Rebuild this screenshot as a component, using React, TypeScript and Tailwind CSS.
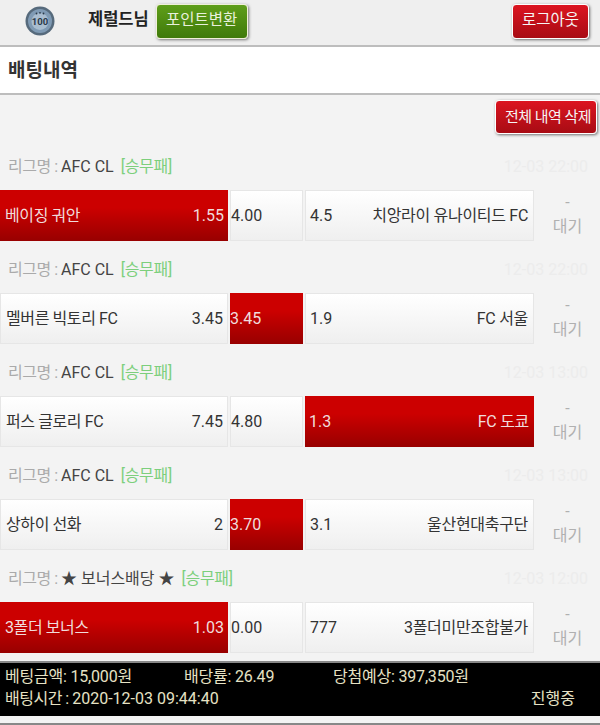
import React from 'react';

type Bet = {
  league: string;
  time: string;
  home: string;
  homeOdds: string;
  draw: string;
  awayOdds: string;
  away: string;
  pick: 'home' | 'draw' | 'away';
};

const bets: Bet[] = [
  { league: 'AFC CL', time: '12-03 22:00', home: '베이징 궈안', homeOdds: '1.55', draw: '4.00', awayOdds: '4.5', away: '치앙라이 유나이티드 FC', pick: 'home' },
  { league: 'AFC CL', time: '12-03 22:00', home: '멜버른 빅토리 FC', homeOdds: '3.45', draw: '3.45', awayOdds: '1.9', away: 'FC 서울', pick: 'draw' },
  { league: 'AFC CL', time: '12-03 13:00', home: '퍼스 글로리 FC', homeOdds: '7.45', draw: '4.80', awayOdds: '1.3', away: 'FC 도쿄', pick: 'away' },
  { league: 'AFC CL', time: '12-03 13:00', home: '상하이 선화', homeOdds: '2', draw: '3.70', awayOdds: '3.1', away: '울산현대축구단', pick: 'draw' },
  { league: '★ 보너스배당 ★', time: '12-03 12:00', home: '3폴더 보너스', homeOdds: '1.03', draw: '0.00', awayOdds: '777', away: '3폴더미만조합불가', pick: 'home' },
];

const cellOff = 'bg-gradient-to-b from-white to-[#efefef] border border-[#e6e6e6] text-[#333]';
const cellOn = 'bg-gradient-to-b from-[#cc0000] from-35% to-[#980000] text-[#f0dcdc]';
const redBtn = 'bg-gradient-to-b from-[#dc1420] to-[#a80c14] text-[#f5f5f5] border border-white rounded-[4px] shadow-[1px_1px_3px_rgba(0,0,0,0.55)]';

function BetRow({ bet }: { bet: Bet }) {
  return (
    <div className="h-[103px] flex flex-col">
      <div className="h-[52px] pt-[18px] pl-2 pr-[12px] flex items-start justify-between text-[16px] leading-[22px]">
        <div className="text-[#aaa] whitespace-nowrap">
          <span className="tracking-[-0.5px]">리그명 : </span>
          <span className="text-[#444]">{bet.league}</span>
          <span className="text-[#7ccf7c] ml-[7px] tracking-[-0.3px]">[승무패]</span>
        </div>
        <div className="text-[#ececec]">{bet.time}</div>
      </div>
      <div className="flex h-[51px] text-[16px]">
        <div className={`w-[228px] flex items-center justify-between pl-[5px] pr-1 ${bet.pick === 'home' ? cellOn : cellOff}`}>
          <span className="tracking-[-0.4px]">{bet.home}</span>
          <span>{bet.homeOdds}</span>
        </div>
        <div className={`w-[73px] ml-[2px] flex items-center ${bet.pick === 'draw' ? cellOn : cellOff}`}>
          {bet.draw}
        </div>
        <div className={`w-[229px] ml-[2px] flex items-center justify-between pl-[4px] pr-[5px] ${bet.pick === 'away' ? cellOn : cellOff}`}>
          <span>{bet.awayOdds}</span>
          <span className="tracking-[-0.3px]">{bet.away}</span>
        </div>
        <div className="flex-1 flex flex-col items-center pt-[1px] pl-[1px] text-[16px] leading-[23px] text-[#b0b0b0]">
          <span>-</span>
          <span className="mt-[1px]">대기</span>
        </div>
      </div>
    </div>
  );
}

export default function App() {
  return (
    <div className="w-[600px] h-[725px] overflow-hidden bg-[#f3f3f3] flex flex-col font-['Roboto','Noto_Sans_CJK_KR',sans-serif]">
      <header className="h-[47px] shrink-0 bg-[#efefef] border-b-2 border-[#bdbdbd] flex items-center pl-[25px] pr-[11px]">
        <svg width="30" height="30" viewBox="0 0 30 30" className="shrink-0 mb-[4px]">
          <circle cx="15" cy="15" r="14.5" fill="#566a7c" />
          <circle cx="15" cy="15" r="12" fill="#7f9ab4" />
          <circle cx="15" cy="15.5" r="8.5" fill="#a9bdd0" />
          <text x="15" y="19" textAnchor="middle" fontSize="9.5" fontWeight="700" fill="#2b3a4a">100</text>
          <circle cx="11.5" cy="7.5" r="0.9" fill="#2b3a4a" />
          <circle cx="15" cy="6.8" r="0.9" fill="#2b3a4a" />
          <circle cx="18.5" cy="7.5" r="0.9" fill="#2b3a4a" />
        </svg>
        <span className="ml-[33px] text-[16.5px] font-bold text-[#222] mb-[5px]">제럴드님</span>
        <button className="ml-[7px] w-[92px] h-[35px] mb-[3px] rounded-[4px] border border-[#f0f0d8] bg-gradient-to-b from-[#5f9e1a] to-[#3f7a0a] text-[#e8f0dc] text-[15.5px] shadow-[1px_1px_3px_rgba(0,0,0,0.5)]">
          포인트변환
        </button>
        <button className={`ml-auto w-[77px] h-[35px] mb-[3px] text-[15.5px] ${redBtn}`}>로그아웃</button>
      </header>

      <div className="h-[48px] shrink-0 bg-white border-b-2 border-[#bdbdbd] flex items-center pl-2 pt-[3px] text-[19px] font-bold text-[#333]">
        배팅내역
      </div>

      <div className="flex justify-end pr-[3px] pt-[5px] h-[43px] shrink-0">
        <button className={`w-[102px] h-[34px] pl-1 text-[15px] tracking-[-0.5px] ${redBtn}`}>전체 내역 삭제</button>
      </div>

      <div className="h-[515px] shrink-0 overflow-hidden">
        {bets.map((bet, i) => (
          <BetRow key={i} bet={bet} />
        ))}
      </div>

      <div className="mt-[8px] h-[55px] shrink-0 bg-black border-t-2 border-[#888] px-[5px] pt-[3px] text-[16px] leading-[22px] text-[#e6e2c4]">
        <div className="flex whitespace-nowrap">
          <span className="w-[179px] tracking-[-0.2px]">베팅금액: 15,000원</span>
          <span className="w-[149px] tracking-[-0.2px]">배당률: 26.49</span>
          <span className="tracking-[-0.2px]">당첨예상: 397,350원</span>
        </div>
        <div className="flex justify-between pr-[20px] whitespace-nowrap">
          <span><span className="tracking-[-0.5px]">배팅시간 : </span>2020-12-03 09:44:40</span>
          <span>진행중</span>
        </div>
      </div>
      <div className="mt-auto h-[2px] shrink-0 bg-[#888]" />
    </div>
  );
}
